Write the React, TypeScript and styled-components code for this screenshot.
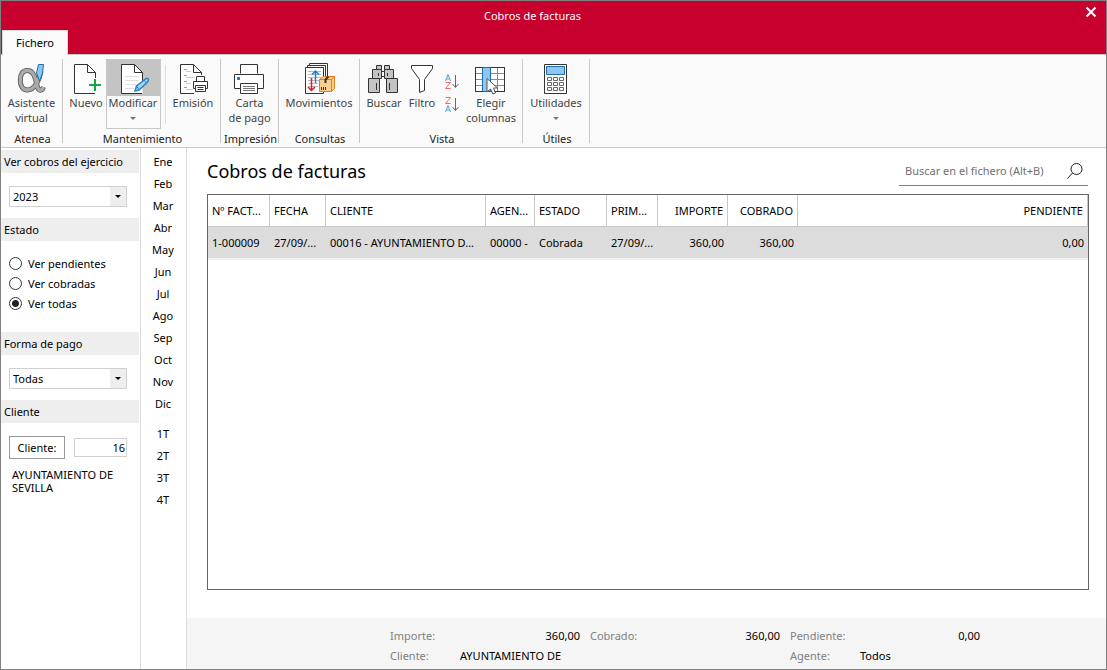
import React, { useState } from "react";
import styled, { createGlobalStyle } from "styled-components";

const GlobalStyle = createGlobalStyle`
  *, *::before, *::after { box-sizing: border-box; }
  body {
    margin: 0;
    font-family: "Noto Sans", "Open Sans", sans-serif;
    font-size: 11px;
    line-height: 15px;
    color: #000;
    background: #fff;
  }
  button, input, select { font: inherit; color: inherit; }
`;

const Window = styled.div`
  min-height: 100vh;
  display: flex;
  flex-direction: column;
  border: 1px solid #808080;
`;

const TitleBar = styled.header`
  display: grid;
  grid-template-columns: 1fr auto 1fr;
  align-items: start;
  height: 29px;
  background: #c8002d;
  color: #fff;
`;

const WindowTitle = styled.div`
  grid-column: 2;
  padding-top: 7px;
  padding-right: 42px;
`;

const CloseButton = styled.button`
  justify-self: end;
  display: flex;
  padding: 5px 9px;
  border: 0;
  background: none;
`;

const TabStrip = styled.nav`
  display: flex;
  padding-left: 1px;
  background: #c8002d;
  border-bottom: 1px solid #c8c8c8;
`;

const Tab = styled.button`
  height: 25px;
  width: 66px;
  margin-bottom: -1px;
  padding: 0 0 2px;
  border: 1px solid #d8d8d8;
  border-bottom: 0;
  background: #fafafa;
`;

const Ribbon = styled.div`
  display: flex;
  height: 93px;
  padding: 4px 0;
  background: #fafafa;
  border-bottom: 1px solid #c8c8c8;
`;

const Group = styled.section<{ $width: number }>`
  display: flex;
  flex-direction: column;
  justify-content: space-between;
  width: ${(p) => p.$width}px;
  border-right: 1px solid #c8c8c8;
`;

const GroupItems = styled.div`
  display: flex;
  justify-content: center;
`;

const GroupLabel = styled.div`
  padding-left: 2px;
  text-align: center;
  white-space: nowrap;
  height: 12px;
  color: #222;
`;

const Tool = styled.button<{ $width: number; $active?: boolean }>`
  display: flex;
  flex-direction: column;
  align-items: center;
  width: ${(p) => p.$width}px;
  height: 70px;
  padding: 0;
  border: 1px solid ${(p) => (p.$active ? "#c8c8c8" : "transparent")};
  background: ${(p) =>
    p.$active ? "linear-gradient(#c4c4c4 36px, #fafafa 36px)" : "none"};
  color: #444;
  white-space: nowrap;

  svg { flex: none; }
`;

const ToolText = styled.span`
  line-height: 15px;
`;

const DownMark = styled.span`
  margin-top: 7px;
  border: 3px solid transparent;
  border-top-color: #777;
`;

const ToolDivider = styled.div`
  width: 1px;
  height: 59px;
  margin: 6px 4px 0;
  background: #dcdcdc;
`;

const SortTools = styled.div`
  display: flex;
  flex-direction: column;
  gap: 5px;
  width: 24px;
  padding-top: 14px;
`;

const SortButton = styled.button`
  display: flex;
  justify-content: center;
  padding: 0;
  border: 0;
  background: none;
`;

const Body = styled.div`
  flex: 1;
  display: flex;
`;

const Sidebar = styled.aside`
  width: 140px;
  padding: 2px 1px 0 0;
  border-right: 1px solid #dcdcdc;
`;

const PanelTitle = styled.h2`
  margin: 0;
  height: 23px;
  padding-left: 3px;
  background: #eee;
  font-size: 11px;
  font-weight: 400;
  line-height: 23px;
  white-space: nowrap;
`;

const Panel = styled.div<{ $top: number; $bottom: number }>`
  padding: ${(p) => p.$top}px 12px ${(p) => p.$bottom}px 8px;
`;

const SelectBox = styled.div`
  display: grid;
  height: 21px;
  border: 1px solid #d0d0d0;
`;

const Select = styled.select`
  grid-area: 1 / 1;
  appearance: none;
  width: 100%;
  padding: 0 18px 0 3px;
  border: 0;
  border-radius: 0;
  background: linear-gradient(#eee, #eee) right / 16px 100% no-repeat #fff;
`;

const SelectMark = styled.span`
  grid-area: 1 / 1;
  place-self: center end;
  margin: 3px 5px 0 0;
  border: 3px solid transparent;
  border-top-color: #000;
  pointer-events: none;
`;

const RadioRow = styled.label`
  display: flex;
  align-items: center;
  gap: 6px;
  height: 20px;
`;

const Radio = styled.input`
  appearance: none;
  width: 13px;
  height: 13px;
  margin: 0;
  border: 1px solid #333;
  border-radius: 50%;
  background: #fff;

  &:checked {
    background: radial-gradient(circle, #222 3px, #fff 4px);
  }
`;

const ClientRow = styled.div`
  display: flex;
  align-items: center;
  justify-content: space-between;
`;

const ClientButton = styled.button`
  width: 56px;
  height: 23px;
  padding: 0;
  border: 1px solid #999;
  background: #fff;
`;

const ClientInput = styled.input`
  width: 53px;
  height: 19px;
  padding: 0 1px;
  border: 1px solid #d0d0d0;
  text-align: right;
`;

const ClientName = styled.p`
  margin: 9px 0 0 3px;
  line-height: 13px;
`;

const Months = styled.nav`
  display: flex;
  flex-direction: column;
  gap: 8px;
  width: 46px;
  padding-top: 2px;
  border-right: 1px solid #dcdcdc;
`;

const PeriodList = styled.div`
  display: flex;
  flex-direction: column;
`;

const Period = styled.button`
  height: 22px;
  padding: 0 1px 0 0;
  border: 0;
  background: none;
`;

const Content = styled.div`
  flex: 1;
  min-width: 0;
  display: flex;
  flex-direction: column;
`;

const Main = styled.main`
  flex: 1;
  display: flex;
  flex-direction: column;
  padding: 8px 17px 28px 20px;
`;

const MainHeader = styled.div`
  display: flex;
  justify-content: space-between;
  align-items: center;
  height: 30px;
  margin-bottom: 8px;
`;

const Heading = styled.h1`
  margin: 0;
  font-size: 18px;
  font-weight: 400;
  line-height: 30px;
`;

const Search = styled.label`
  display: flex;
  align-items: center;
  width: 189px;
  height: 30px;
  margin-right: 1px;
  padding: 0 5px 0 6px;
  border-bottom: 1px solid #808080;
`;

const SearchInput = styled.input`
  flex: 1;
  min-width: 0;
  padding: 0;
  border: 0;
  background: none;
  outline: 0;
  &::placeholder { color: #707070; }
`;

const Frame = styled.div`
  flex: 1;
  border: 1px solid #666;
`;

const Table = styled.table`
  width: 100%;
  table-layout: fixed;
  border-collapse: separate;
  border-spacing: 0;
`;

const Th = styled.th<{ $width?: number; $right?: boolean }>`
  width: ${(p) => (p.$width ? `${p.$width}px` : "auto")};
  height: 32px;
  padding: 0 4px;
  border-right: 1px solid #c8c8c8;
  border-bottom: 1px solid #c8c8c8;
  font-weight: 400;
  text-align: ${(p) => (p.$right ? "right" : "left")};
  white-space: nowrap;
`;

const Td = styled.td<{ $right?: boolean }>`
  height: 33px;
  padding: 0 4px;
  background: #dcdcdc;
  border-bottom: 2px solid #f0f0f0;
  text-align: ${(p) => (p.$right ? "right" : "left")};
  white-space: nowrap;
`;

const Summary = styled.footer`
  display: grid;
  grid-template-columns: 70px 120px 80px 120px 80px 120px;
  grid-auto-rows: 20px;
  align-items: center;
  height: 51px;
  padding: 7px 0 0 203px;
  background: #f5f5f5;
  white-space: nowrap;
`;

const SummaryLabel = styled.span<{ $column: number }>`
  grid-column: ${(p) => p.$column};
  padding-left: ${(p) => (p.$column > 1 ? 10 : 0)}px;
  color: #808080;
`;

const SummaryValue = styled.span<{ $column: number; $left?: boolean }>`
  grid-column: ${(p) => p.$column};
  text-align: ${(p) => (p.$left ? "left" : "right")};
`;

const Icon = ({ children }: { children: React.ReactNode }) => (
  <svg width="34" height="35" viewBox="1 0 34 35" fill="none" stroke="#333" strokeWidth="1" aria-hidden="true">
    {children}
  </svg>
);

const alpha =
  "M27 11C25.500 20 20.500 30 13.500 30C8.500 30 6.300 25.500 6.300 20C6.300 14.500 8.500 10.500 13.500 10.500C20.500 10.500 21.500 20 23.500 27C24.500 31 28 31.500 29.500 27";

const AlphaIcon = () => (
  <Icon>
    <path d={alpha} stroke="#555" strokeWidth="5" />
    <path d={alpha} stroke="#aaa" strokeWidth="3.400" />
    <path d="M24.500 4.500H29.500L28.500 13L25.500 21L22.500 13Z" fill="#8ec6f0" stroke="#1d6fae" />
  </Icon>
);

const Page = ({ lines }: { lines?: boolean }) => (
  <>
    <path d="M6.500 4.500H19.500L27.500 12.500V33.500H6.500Z" fill="#fff" stroke="none" />
    <path d="M27 33.500H6.500V4.500H19.500L27.500 12.500V23M19.500 4.500V12.500H27.500" />
    {lines && <path d="M10 16.500H24M10 20.500H24M10 24.500H21M10 28.500H19" stroke="#ddd" />}
  </>
);

const NewIcon = () => (
  <Icon>
    <Page />
    <path d="M21 25H33M27 18V33" stroke="#fafafa" strokeWidth="4" />
    <path d="M21 25H33M27 19V31" stroke="#16a34a" strokeWidth="2" />
  </Icon>
);

const EditIcon = () => (
  <Icon>
    <Page lines />
    <path d="M20 31L21.500 26L30.500 19Q32.500 17.500 33.500 19.500Q33.500 21 32 22.500L24 30Z" fill="#a9d3f2" stroke="#2383c4" strokeWidth="1.500" />
    <path d="M21.500 26L24 29.500M29 20L31.500 23" stroke="#2383c4" />
  </Icon>
);

const IssueIcon = () => (
  <Icon>
    <path d="M19 33.500H5.500V4.500H18.500L26.500 12.500V15M18.500 4.500V12.500H26.500" fill="#fff" />
    <path d="M9 9.500H12M9 15.500H12M9 21.500H12M9 27.500H12" stroke="#f28c1e" />
    <path d="M11 11.500H16M11 17.500H19M11 23.500H16M11 29.500H18" stroke="#ccc" />
    <g fill="#fff">
      <path d="M21.500 21.500V16.500H29.500V21.500" />
      <path d="M18.500 21.500H32.500V28.500H18.500Z" />
      <path d="M20.500 25.500H30.500V31.500H20.500Z" />
      <path d="M22.500 27.500H28.500M22.500 29.500H28.500" />
    </g>
  </Icon>
);

const PrintIcon = () => (
  <Icon>
    <g fill="#fff">
      <path d="M8.500 13.500V4.500H25.500V13.500" />
      <path d="M2.500 14.500H31.500V28.500H2.500Z" />
      <path d="M8.500 23.500H25.500V33.500H8.500Z" />
    </g>
    <path d="M11 26.500H23M11 28.500H23M11 30.500H23" stroke="#777" />
    <path d="M5 17H8V20H5Z" fill="#1b83d0" stroke="none" />
  </Icon>
);

const MovementsIcon = () => (
  <Icon>
    <g fill="#fff">
      <path d="M8.500 3.500H26.500V21H8.500Z" />
      <path d="M6.500 5.500H24.500V23H6.500Z" />
      <path d="M4.500 7.500H22.500V33.500H4.500Z" />
    </g>
    <path d="M7 11.500H20M7 14.500H20M7 17.500H20M7 20.500H18M7 23.500H17M7 26.500H17" stroke="#bbb" />
    <path d="M10.500 18V30M7 27L10.500 30.500L14 27" stroke="#e0182d" strokeWidth="1.500" />
    <path d="M14.500 23V11M11 14.500L14.500 11L18 14.500" stroke="#1b83d0" strokeWidth="1.500" />
    <path d="M18.500 19.500L22.500 16.500H33.500V28.500L30.500 31.500H18.500Z" fill="#f8d08c" stroke="#e97a20" />
    <path d="M18.500 19.500H30.500V31.500M30.500 19.500L33.500 16.500" stroke="#e97a20" />
    <path d="M24.500 23V19.500L27.500 16.500" strokeWidth="2" />
    <path d="M20.500 27V30M22.500 27V30M24.500 27V30" />
  </Icon>
);

const BinocularsIcon = () => (
  <Icon>
    <g fill="#c4c4c4">
      <path d="M10.500 5.500H15.500V9.500H10.500ZM18.500 5.500H23.500V9.500H18.500Z" />
      <path d="M6.500 9.500H15.500V18.500H6.500ZM18.500 9.500H27.500V18.500H18.500Z" />
      <path d="M2.500 18.500H13.500V32.500H2.500ZM20.500 18.500H31.500V32.500H20.500Z" />
      <path d="M15.500 11.500H18.500V16.500H15.500Z" fill="#fff" />
    </g>
    <path d="M12.500 13V16M21.500 13V16M10.500 23V30M23.500 23V30" />
  </Icon>
);

const FilterIcon = () => (
  <Icon>
    <path d="M7.500 5.500H28.500V8.500L20.500 19.500V30.500L15.500 32.500V19.500L7.500 8.500Z" fill="#fff" />
  </Icon>
);

const ColumnsIcon = () => (
  <Icon>
    <path d="M2.500 7.500H31.500V31.500H2.500Z" fill="#fff" />
    <path d="M2 13.500H32M2 19.500H32M2 25.500H32M16.500 8V31M24.500 8V31" stroke="#888" />
    <path d="M2.500 7.500H31.500V31.500H2.500Z" />
    <path d="M9.500 7.500H17.500V31.500H9.500Z" fill="#8ec6f0" stroke="#1b6cb0" />
    <path d="M14 18.500V32L17.500 29L20 34L22.500 33L20.500 28H24.500Z" fill="#fff" stroke="#555" />
  </Icon>
);

const CalculatorIcon = () => (
  <Icon>
    <path d="M6.500 4.500H28.500V33.500H6.500Z" fill="#fff" />
    <path d="M8.500 6.500H26.500V14.500H8.500Z" fill="#8ec6f0" stroke="#1b6cb0" />
    <path
      d="M9.500 17.500H13.500V20.500H9.500ZM15.500 17.500H19.500V20.500H15.500ZM21.500 17.500H25.500V20.500H21.500ZM9.500 22.500H13.500V25.500H9.500ZM15.500 22.500H19.500V25.500H15.500ZM21.500 22.500H25.500V25.500H21.500ZM9.500 27.500H13.500V30.500H9.500ZM15.500 27.500H19.500V30.500H15.500ZM21.500 27.500H25.500V30.500H21.500Z"
      stroke="#666"
    />
  </Icon>
);

const SortIcon = ({ ascending }: { ascending?: boolean }) => {
  const a = "M0.500 7L3 0.500L5.500 7M1.500 5H4.500";
  const z = "M0.500 0.500H5.500L0.500 6.500H5.500";
  return (
    <svg width="16" height="18" viewBox="0 0 16 18" fill="none" aria-hidden="true">
      <path d={ascending ? a : z} transform="translate(1 1)" stroke={ascending ? "#4ba3e3" : "#ee6a6a"} />
      <path d={ascending ? z : a} transform="translate(1 9)" stroke={ascending ? "#ee6a6a" : "#4ba3e3"} />
      <path d="M11.500 2V14M8.500 11L11.500 14.500L14.500 11" stroke="#666" />
    </svg>
  );
};

const months = ["Ene", "Feb", "Mar", "Abr", "May", "Jun", "Jul", "Ago", "Sep", "Oct", "Nov", "Dic"];
const quarters = ["1T", "2T", "3T", "4T"];

const columns = [
  { title: "Nº FACT...", value: "1-000009", width: 62 },
  { title: "FECHA", value: "27/09/...", width: 56 },
  { title: "CLIENTE", value: "00016 - AYUNTAMIENTO D...", width: 160 },
  { title: "AGEN...", value: "00000 -", width: 49 },
  { title: "ESTADO", value: "Cobrada", width: 72 },
  { title: "PRIM...", value: "27/09/...", width: 51 },
  { title: "IMPORTE", value: "360,00", width: 70, right: true },
  { title: "COBRADO", value: "360,00", width: 70, right: true },
  { title: "PENDIENTE", value: "0,00", right: true },
];

const states = ["Ver pendientes", "Ver cobradas", "Ver todas"];

export default function App() {
  const [state, setState] = useState("Ver todas");

  return (
    <Window>
      <GlobalStyle />
      <TitleBar>
        <WindowTitle>Cobros de facturas</WindowTitle>
        <CloseButton aria-label="Cerrar">
          <svg width="12" height="12" viewBox="0 0 12 12" stroke="#fff" strokeWidth="2">
            <path d="M1.500 1.500L10.500 10.500M10.500 1.500L1.500 10.500" />
          </svg>
        </CloseButton>
      </TitleBar>
      <TabStrip>
        <Tab>Fichero</Tab>
      </TabStrip>

      <Ribbon>
        <Group $width={62}>
          <GroupItems>
            <Tool $width={60}><AlphaIcon /><ToolText>Asistente<br />virtual</ToolText></Tool>
          </GroupItems>
          <GroupLabel>Atenea</GroupLabel>
        </Group>
        <Group $width={158}>
          <GroupItems>
            <Tool $width={39}><NewIcon /><ToolText>Nuevo</ToolText></Tool>
            <Tool $width={55} $active><EditIcon /><ToolText>Modificar</ToolText><DownMark /></Tool>
            <ToolDivider />
            <Tool $width={47}><IssueIcon /><ToolText>Emisión</ToolText></Tool>
          </GroupItems>
          <GroupLabel>Mantenimiento</GroupLabel>
        </Group>
        <Group $width={58}>
          <GroupItems>
            <Tool $width={56}><PrintIcon /><ToolText>Carta<br />de pago</ToolText></Tool>
          </GroupItems>
          <GroupLabel>Impresión</GroupLabel>
        </Group>
        <Group $width={81}>
          <GroupItems>
            <Tool $width={78}><MovementsIcon /><ToolText>Movimientos</ToolText></Tool>
          </GroupItems>
          <GroupLabel>Consultas</GroupLabel>
        </Group>
        <Group $width={163}>
          <GroupItems>
            <Tool $width={40}><BinocularsIcon /><ToolText>Buscar</ToolText></Tool>
            <Tool $width={36}><FilterIcon /><ToolText>Filtro</ToolText></Tool>
            <SortTools>
              <SortButton aria-label="Orden ascendente"><SortIcon ascending /></SortButton>
              <SortButton aria-label="Orden descendente"><SortIcon /></SortButton>
            </SortTools>
            <Tool $width={54}><ColumnsIcon /><ToolText>Elegir<br />columnas</ToolText></Tool>
          </GroupItems>
          <GroupLabel>Vista</GroupLabel>
        </Group>
        <Group $width={67}>
          <GroupItems>
            <Tool $width={60}><CalculatorIcon /><ToolText>Utilidades</ToolText><DownMark /></Tool>
          </GroupItems>
          <GroupLabel>Útiles</GroupLabel>
        </Group>
      </Ribbon>

      <Body>
        <Sidebar>
          <PanelTitle>Ver cobros del ejercicio</PanelTitle>
          <Panel $top={13} $bottom={11}>
            <SelectBox>
              <Select aria-label="Ejercicio"><option>2023</option></Select>
              <SelectMark />
            </SelectBox>
          </Panel>
          <PanelTitle>Estado</PanelTitle>
          <Panel $top={12} $bottom={19}>
            {states.map((name) => (
              <RadioRow key={name}>
                <Radio type="radio" name="estado" checked={state === name} onChange={() => setState(name)} />
                {name}
              </RadioRow>
            ))}
          </Panel>
          <PanelTitle>Forma de pago</PanelTitle>
          <Panel $top={13} $bottom={11}>
            <SelectBox>
              <Select aria-label="Forma de pago"><option>Todas</option></Select>
              <SelectMark />
            </SelectBox>
          </Panel>
          <PanelTitle>Cliente</PanelTitle>
          <Panel $top={13} $bottom={13}>
            <ClientRow>
              <ClientButton>Cliente:</ClientButton>
              <ClientInput aria-label="Código de cliente" defaultValue="16" />
            </ClientRow>
            <ClientName>AYUNTAMIENTO DE SEVILLA</ClientName>
          </Panel>
        </Sidebar>

        <Months>
          <PeriodList>{months.map((m) => <Period key={m}>{m}</Period>)}</PeriodList>
          <PeriodList>{quarters.map((q) => <Period key={q}>{q}</Period>)}</PeriodList>
        </Months>

        <Content>
          <Main>
            <MainHeader>
              <Heading>Cobros de facturas</Heading>
              <Search>
                <SearchInput type="text" placeholder="Buscar en el fichero (Alt+B)" aria-label="Buscar en el fichero" />
                <svg width="16" height="16" viewBox="0 0 16 16" fill="none" stroke="#222" aria-hidden="true">
                  <circle cx="9.500" cy="6" r="5.500" />
                  <path d="M5.500 10L0.500 15.500" />
                </svg>
              </Search>
            </MainHeader>
            <Frame>
              <Table>
                <thead>
                  <tr>
                    {columns.map((c) => (
                      <Th key={c.title} scope="col" $width={c.width} $right={c.right}>{c.title}</Th>
                    ))}
                  </tr>
                </thead>
                <tbody>
                  <tr>
                    {columns.map((c) => (
                      <Td key={c.title} $right={c.right}>{c.value}</Td>
                    ))}
                  </tr>
                </tbody>
              </Table>
            </Frame>
          </Main>
          <Summary>
            <SummaryLabel $column={1}>Importe:</SummaryLabel>
            <SummaryValue $column={2}>360,00</SummaryValue>
            <SummaryLabel $column={3}>Cobrado:</SummaryLabel>
            <SummaryValue $column={4}>360,00</SummaryValue>
            <SummaryLabel $column={5}>Pendiente:</SummaryLabel>
            <SummaryValue $column={6}>0,00</SummaryValue>
            <SummaryLabel $column={1}>Cliente:</SummaryLabel>
            <SummaryValue $column={2} $left>AYUNTAMIENTO DE</SummaryValue>
            <SummaryLabel $column={5}>Agente:</SummaryLabel>
            <SummaryValue $column={6} $left>Todos</SummaryValue>
          </Summary>
        </Content>
      </Body>
    </Window>
  );
}
